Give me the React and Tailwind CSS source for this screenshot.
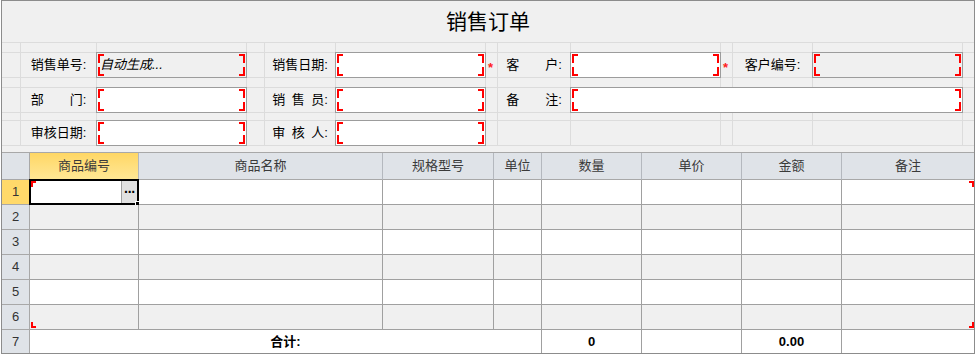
const FONT = "font-['Liberation_Sans','Noto_Sans_CJK_SC',sans-serif]";

const Corner = ({ pos }) => {
  const map = {
    tl: 'left-px top-px border-l-2 border-t-2',
    tr: 'right-px top-px border-r-2 border-t-2',
    bl: 'left-px bottom-px border-l-2 border-b-2',
    br: 'right-px bottom-px border-r-2 border-b-2',
  };
  return <span className={`absolute w-[6px] h-[9px] border-[#ff0000] ${map[pos]}`} />;
};

const Box = ({ readOnly, text }) => (
  <div
    className={`relative -mt-px -ml-px h-[26px] w-[calc(100%+2px)] border border-[#9c9c9c] ${
      readOnly ? 'bg-[#f0f0f0]' : 'bg-white'
    }`}
  >
    <Corner pos="tl" />
    <Corner pos="tr" />
    <Corner pos="bl" />
    <Corner pos="br" />
    {text && <span className="block pl-[3px] text-[13px] leading-[24px] italic text-black">{text}</span>}
  </div>
);

const Label = ({ text }) => (
  <div className="flex h-full items-center justify-center text-[13px] text-black">
    <div className="flex w-[52px] justify-between">
      {[...text].map((c, i) => (
        <span key={i}>{c}</span>
      ))}
    </div>
    <span>:</span>
  </div>
);

const Star = () => <span className="block pl-[2px] pt-[8px] text-[13px] font-bold leading-none text-[#ff2020]">*</span>;

const E = { t: 'e' };
const L = (text) => ({ t: 'l', text });
const I = (opts = {}) => ({ t: 'i', ...opts });
const S = { t: 's' };

const formRows = [
  [E, L('销售单号'), I({ readOnly: true, text: '自动生成...' }), E, L('销售日期'), I(), S, L('客户'), I(), S, L('客户编号'), I({ readOnly: true }), E],
  [E, L('部门'), I(), E, L('销售员'), I(), E, L('备注'), I({ span: 4 }), E],
  [E, L('审核日期'), I(), E, L('审核人'), I(), E, E, E, E, E, E, E],
];

const FormCell = ({ cell, last }) => {
  const base = `border-b border-[#dcdcdc] ${last ? '' : 'border-r'} ${cell.span === 4 ? 'col-span-4' : ''}`;
  return (
    <div className={base}>
      {cell.t === 'l' && <Label text={cell.text} />}
      {cell.t === 'i' && <Box readOnly={cell.readOnly} text={cell.text} />}
      {cell.t === 's' && <Star />}
    </div>
  );
};

const Spacer = () => (
  <>
    {Array.from({ length: 13 }).map((_, i) => (
      <div key={i} className={`border-b border-[#dcdcdc] ${i === 12 ? '' : 'border-r'}`} />
    ))}
  </>
);

const headers = ['商品编号', '商品名称', '规格型号', '单位', '数量', '单价', '金额', '备注'];

const TCorner = ({ className }) => <span className={`absolute w-[5px] h-[6px] border-[#ff0000] ${className}`} />;

export default function App() {
  return (
    <div className={`bg-white w-[977px] h-[355px] ${FONT}`}>
      <div className="ml-px w-[974px] h-[354px] border border-[#8c8c8c] bg-[#f0f0f0]">
        <div className="flex h-[42px] items-center justify-center border-b border-[#dcdcdc] text-[21px] text-black">
          销售订单
        </div>

        <div className="grid grid-cols-[19px_76px_150px_18px_71px_150px_12px_73px_150px_12px_80px_150px_11px] grid-rows-[10px_25px_10px_25px_8px_25px]">
          <Spacer />
          {formRows[0].map((c, i) => (
            <FormCell key={i} cell={c} last={i === formRows[0].length - 1} />
          ))}
          <Spacer />
          {formRows[1].map((c, i) => (
            <FormCell key={i} cell={c} last={i === formRows[1].length - 1} />
          ))}
          <Spacer />
          {formRows[2].map((c, i) => (
            <FormCell key={i} cell={c} last={i === formRows[2].length - 1} />
          ))}
        </div>
        <div className="h-[6px]" />

        <div className="relative border-t border-[#a8a8a8] text-[13px]">
          <div className="grid grid-cols-[28px_109px_244px_111px_48px_100px_100px_100px_132px]">
            <div className="h-[27px] border-r border-b border-[#a8a8a8] bg-[#dfe3e8]" />
            {headers.map((h, i) => (
              <div
                key={h}
                className={`flex h-[27px] items-center justify-center border-b border-[#a8a8a8] text-[#3a3a3a] ${
                  i === headers.length - 1 ? '' : 'border-r border-r-[#b4b8be]'
                } ${i === 0 ? 'bg-linear-to-b from-[#ffd764] to-[#ffe794]' : 'bg-[#dfe3e8]'}`}
              >
                {h}
              </div>
            ))}

            {[1, 2, 3, 4, 5, 6].map((r) => (
              <div key={r} className="contents">
                <div
                  className={`flex h-[25px] items-center justify-center border-r border-b border-[#a8a8a8] text-[#333] ${
                    r === 1 ? 'bg-[#ffd96a]' : 'bg-[#dfe3e8]'
                  }`}
                >
                  {r}
                </div>
                {headers.map((h, i) => (
                  <div
                    key={h}
                    className={`relative h-[25px] border-b border-[#a0a0a0] ${i === headers.length - 1 ? '' : 'border-r'} ${
                      r % 2 === 0 ? 'bg-[#f0f0f0]' : 'bg-white'
                    }`}
                  >
                    {r === 1 && i === 0 && (
                      <div className="absolute -left-px -top-px h-[calc(100%+2px)] w-[calc(100%+2px)] border-2 border-black">
                        <div className="absolute right-0 top-0 bottom-0 flex w-[16px] items-center justify-center border-l border-[#a0a0a0] bg-[#e1e1e1] text-[14px] font-bold leading-none tracking-[-1px] text-black">
                          ···
                        </div>
                        <span className="absolute -right-[4px] -bottom-[4px] h-[6px] w-[6px] border border-white bg-black" />
                      </div>
                    )}
                  </div>
                ))}
              </div>
            ))}

            <div className="flex h-[23px] items-center justify-center border-r border-[#a8a8a8] bg-[#dfe3e8] text-[#333]">7</div>
            <div className="col-span-4 flex h-[23px] items-center justify-center border-r border-[#a0a0a0] bg-white font-bold text-black">
              合计:
            </div>
            <div className="flex h-[23px] items-center justify-center border-r border-[#a0a0a0] bg-white font-bold text-black">0</div>
            <div className="h-[23px] border-r border-[#a0a0a0] bg-white" />
            <div className="flex h-[23px] items-center justify-center border-r border-[#a0a0a0] bg-white font-bold text-black">0.00</div>
            <div className="h-[23px] bg-white" />
          </div>

          <TCorner className="left-[29px] top-[28px] border-l-2 border-t-2" />
          <TCorner className="right-0 top-[28px] border-r-2 border-t-2" />
          <TCorner className="left-[29px] bottom-[25px] border-l-2 border-b-2" />
          <TCorner className="right-0 bottom-[25px] border-r-2 border-b-2" />
        </div>
      </div>
    </div>
  );
}
